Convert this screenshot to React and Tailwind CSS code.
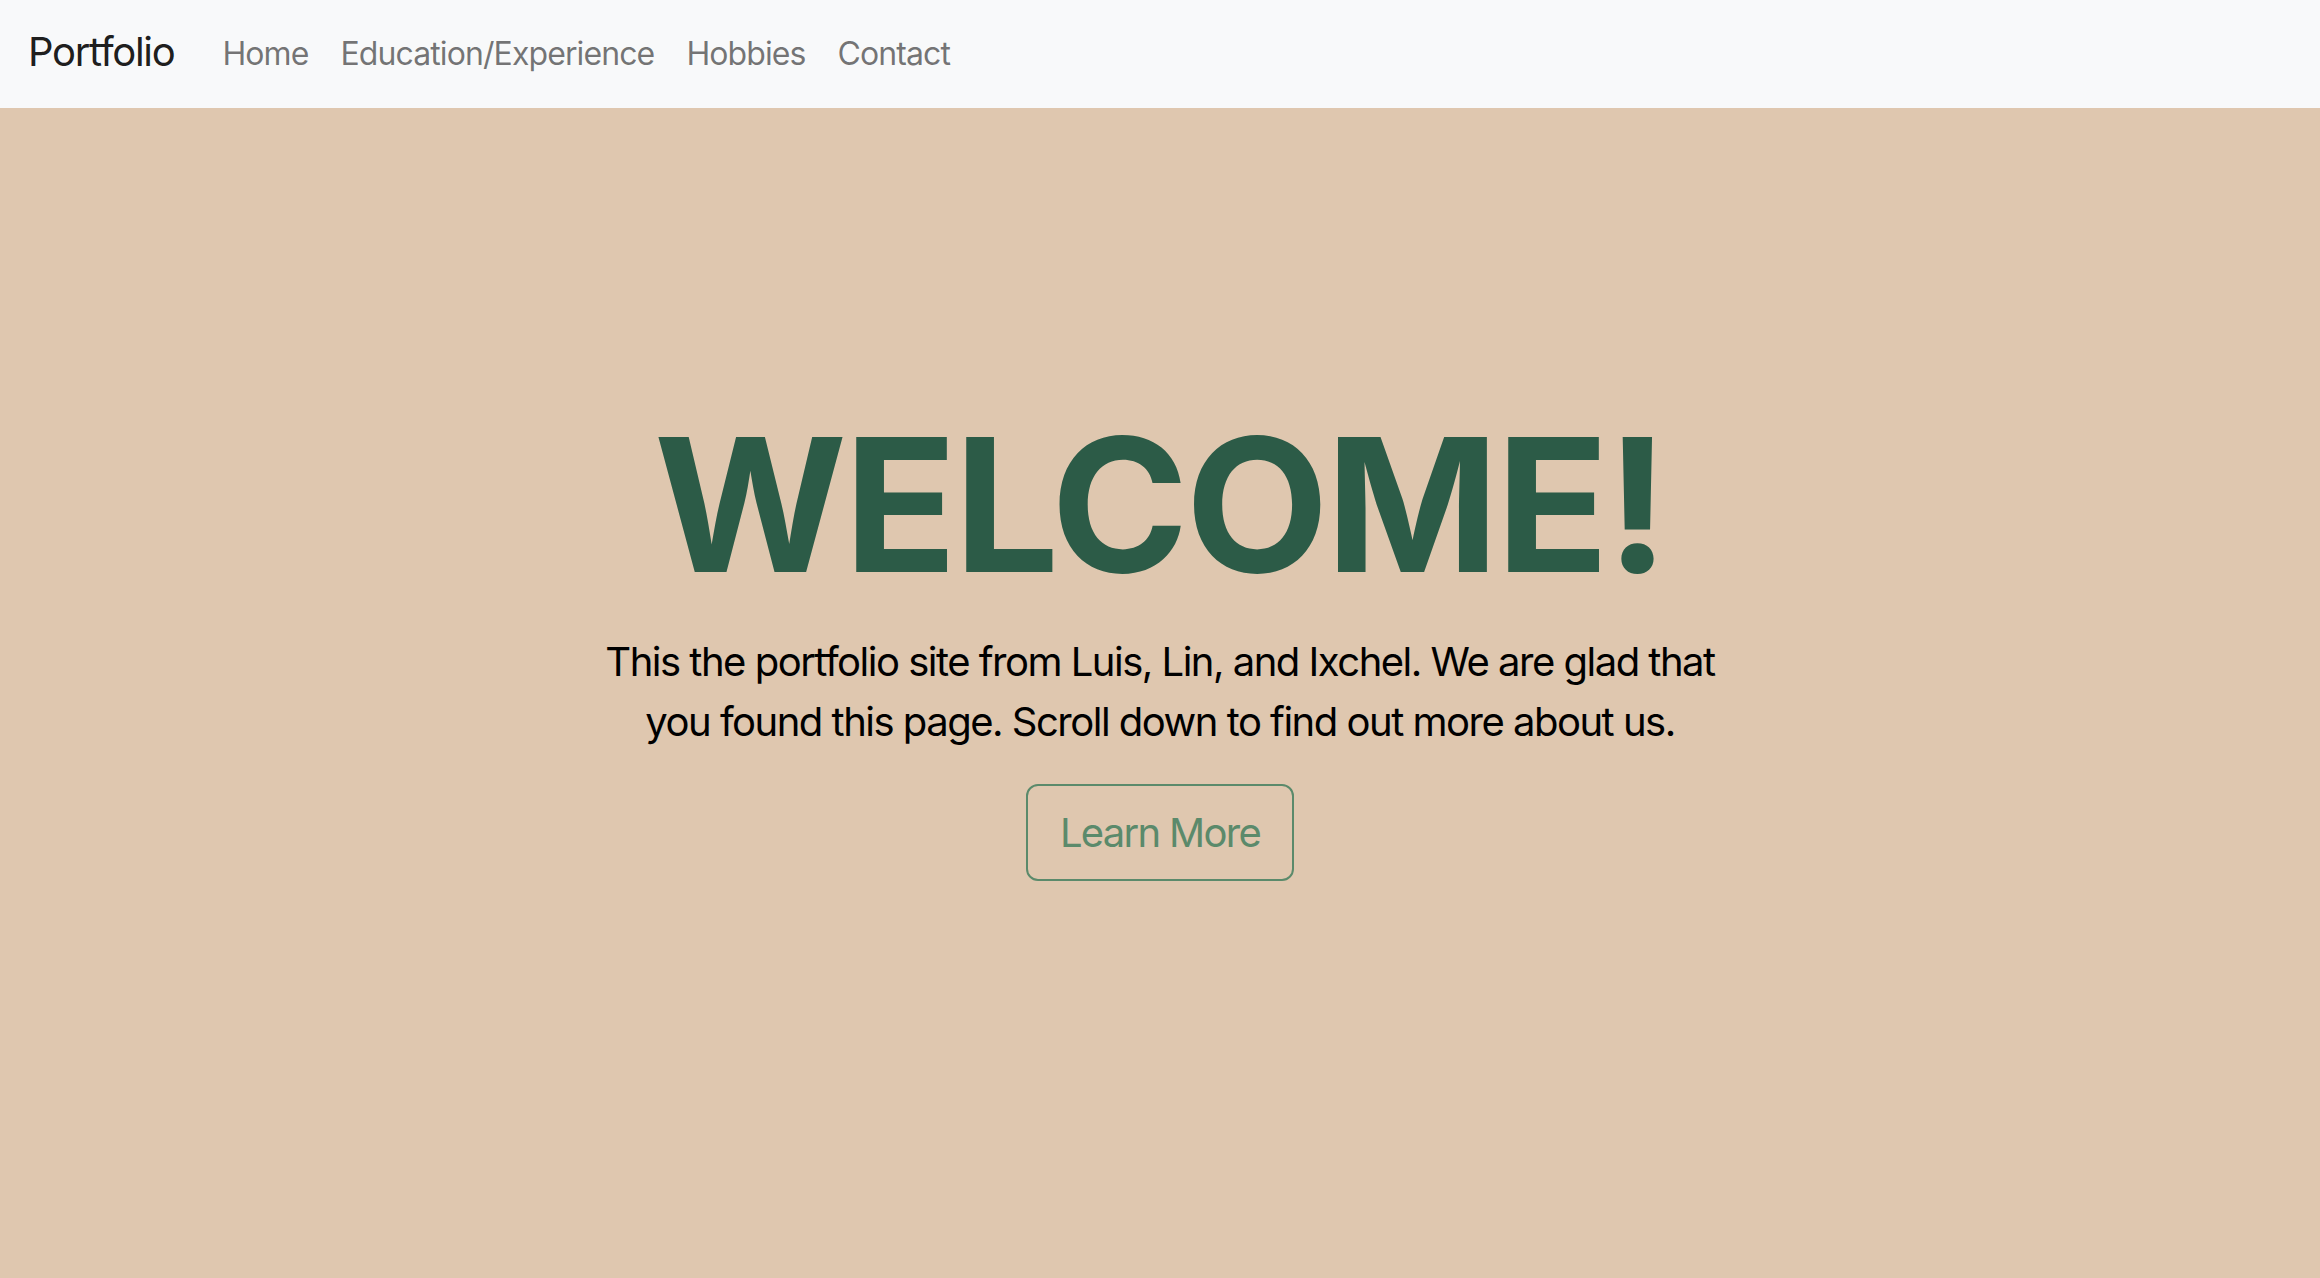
import React from "react";

const links = ["Home", "Education/Experience", "Hobbies", "Contact"];

const App = () => {
  return (
    <div className="min-h-screen bg-[#dfc7af] font-['Inter',sans-serif]">
      {/* navbar */}
      <nav className="h-[108px] bg-[#f8f9fa] flex items-center pl-[28px]">
        <a href="#" className="text-[40px] leading-[60px] tracking-[-1.3px] text-black/90 mr-[32px] pb-[4px]">
          Portfolio
        </a>
        <ul className="flex items-center">
          {links.map((l) => (
            <li key={l}>
              <a href="#" className="block px-[16px] text-[32px] leading-[48px] tracking-[-0.9px] text-black/55">
                {l}
              </a>
            </li>
          ))}
        </ul>
      </nav>

      {/* hero */}
      <section className="h-[1170px] flex flex-col items-center pt-[285px]">
        <h1 className="text-[186px] leading-[224px] font-bold text-[#2c5b47] tracking-[-3px]">
          WELCOME!
        </h1>
        <p className="mt-[15px] w-[1130px] text-center text-[40px] leading-[60px] tracking-[-1.5px] text-black">
          This the portfolio site from Luis, Lin, and Ixchel. We are glad that you found this page. Scroll down to find out more about us.
        </p>
        <button
          type="button"
          className="mt-[32px] h-[97px] px-[32px] border-2 border-[#5b8a6b] rounded-[12px] text-[40px] leading-[60px] tracking-[-1.7px] text-[#5b8a6b]"
        >
          Learn More
        </button>
      </section>
    </div>
  );
};

export default App;
